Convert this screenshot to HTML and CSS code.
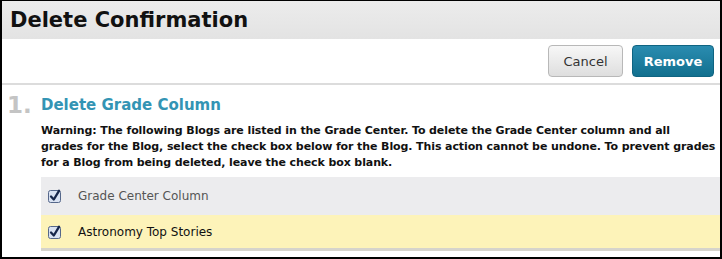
FILE: index.html
```html
<!DOCTYPE html>
<html>
<head>
<meta charset="utf-8">
<link rel="stylesheet" href="styles.css">
</head>
<body>
<div class="frame">
  <header class="page-title"><h1>Delete Confirmation</h1></header>
  <div class="actions">
    <button class="btn btn-cancel">Cancel</button>
    <button class="btn btn-remove">Remove</button>
  </div>
  <section class="step">
    <div class="step-num">1.</div>
    <div class="step-body">
      <h2>Delete Grade Column</h2>
      <p class="warning">Warning: The following Blogs are listed in the Grade Center. To delete the Grade Center column and all<br>grades for the Blog, select the check box below for the Blog. This action cannot be undone. To prevent grades<br>for a Blog from being deleted, leave the check box blank.</p>
      <div class="rows">
        <div class="row row-head">
          <span class="cb"><svg width="14" height="14" viewBox="0 0 14 14"><rect x="0.5" y="1.5" width="12" height="12" rx="2" fill="#d9e2f2" stroke="#55678a"/><path d="M3 7.5 L5.8 10.5 L11 1.8" fill="none" stroke="#16264a" stroke-width="2.3" stroke-linecap="round" stroke-linejoin="round"/></svg></span>
          <span class="label">Grade Center Column</span>
        </div>
        <div class="row row-item">
          <span class="cb"><svg width="14" height="14" viewBox="0 0 14 14"><rect x="0.5" y="1.5" width="12" height="12" rx="2" fill="#d9e2f2" stroke="#55678a"/><path d="M3 7.5 L5.8 10.5 L11 1.8" fill="none" stroke="#16264a" stroke-width="2.3" stroke-linecap="round" stroke-linejoin="round"/></svg></span>
          <span class="label">Astronomy Top Stories</span>
        </div>
      </div>
    </div>
  </section>
</div>
</body>
</html>
```

FILE: styles.css
```css
html, body { margin: 0; padding: 0; background: #000; }
.frame {
  box-sizing: border-box;
  width: 718px;
  height: 256px;
  margin: 1px 0 0 2px;
  background: #fff;
  overflow: hidden;
  font-family: "DejaVu Sans", "Open Sans", sans-serif;
}
.page-title {
  height: 38px;
  background: linear-gradient(#ececec, #e3e3e3);
  padding-left: 8px;
  display: flex;
  align-items: center;
}
.page-title h1 {
  margin: 0;
  font-size: 21px;
  font-weight: bold;
  color: #111;
}
.actions {
  height: 44px;
  border-bottom: 2px solid #dcdcdc;
  display: flex;
  justify-content: flex-end;
  align-items: center;
  gap: 9px;
  padding-right: 6px;
}
.btn {
  height: 32px;
  border-radius: 4px;
  font-family: inherit;
  font-size: 13px;
  padding: 0;
}
.btn-cancel {
  width: 75px;
  background: linear-gradient(#f7f7f7, #dedede);
  border: 1px solid #b8b8b8;
  color: #333;
}
.btn-remove {
  width: 82px;
  background: linear-gradient(#2a8cb0, #12708f);
  border: 1px solid #0f6482;
  color: #fff;
  font-weight: bold;
}
.step {
  display: flex;
  padding-top: 8px;
}
.step-num {
  width: 39px;
  padding-left: 5px;
  box-sizing: border-box;
  font-size: 23px;
  font-weight: bold;
  color: #c4c4c4;
  line-height: 24px;
}
.step-body { flex: 1; min-width: 0; }
.step-body h2 {
  margin: 0;
  font-size: 15px;
  font-weight: bold;
  color: #3394b4;
  line-height: 24px;
}
.warning {
  margin: 6px -4px 0 0;
  font-size: 11px;
  font-weight: bold;
  line-height: 16px;
  color: #111;
  letter-spacing: -0.1px;
  white-space: nowrap;
}
.rows { margin-top: 6px; }
.row {
  display: flex;
  align-items: center;
  padding-left: 7px;
}
.row-head { height: 38px; background: #ececee; }
.row-item { height: 33px; background: #fdf3b9; border-bottom: 3px solid #d6d4cc; }
.cb { display: flex; width: 30px; }
.label { font-size: 12px; }
.row-head .label { color: #555; }
.row-item .label { color: #111; }
```
